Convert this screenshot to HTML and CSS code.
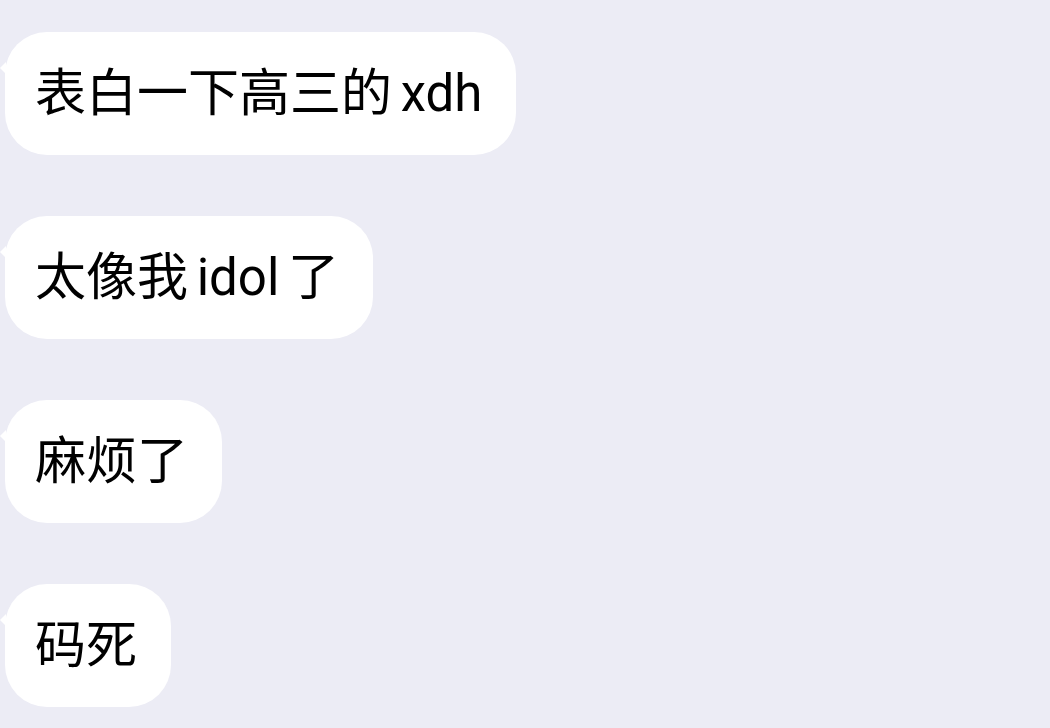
FILE: index.html
```html
<!DOCTYPE html>
<html lang="zh-CN">
<head>
<meta charset="utf-8">
<title>Chat</title>
<link rel="stylesheet" href="styles.css">
</head>
<body>
<div class="chat">
  <div class="bubble">表白一下高三的 xdh</div>
  <div class="bubble">太像我 idol 了</div>
  <div class="bubble">麻烦了</div>
  <div class="bubble">码死</div>
</div>
</body>
</html>
```
FILE: styles.css
```css
html, body {
  margin: 0;
  height: 100%;
}
body {
  background: #ececf5;
  font-family: Roboto, "Noto Sans CJK SC", sans-serif;
  overflow: hidden;
}
.chat {
  display: flex;
  flex-direction: column;
  align-items: flex-start;
  gap: 61px;
  padding: 32px 0 0 5px;
}
.bubble {
  position: relative;
  background: #ffffff;
  color: #000;
  font-size: 51px;
  word-spacing: -4px;
  height: 123px;
  box-sizing: border-box;
  padding: 0 34px 10px 30px;
  display: flex;
  align-items: center;
  border-radius: 42px;
  white-space: nowrap;
}
.bubble::before {
  content: "";
  position: absolute;
  left: -5px;
  top: 30px;
  width: 0;
  height: 0;
  border-top: 6px solid transparent;
  border-bottom: 6px solid transparent;
  border-right: 6px solid #ffffff;
}
```
